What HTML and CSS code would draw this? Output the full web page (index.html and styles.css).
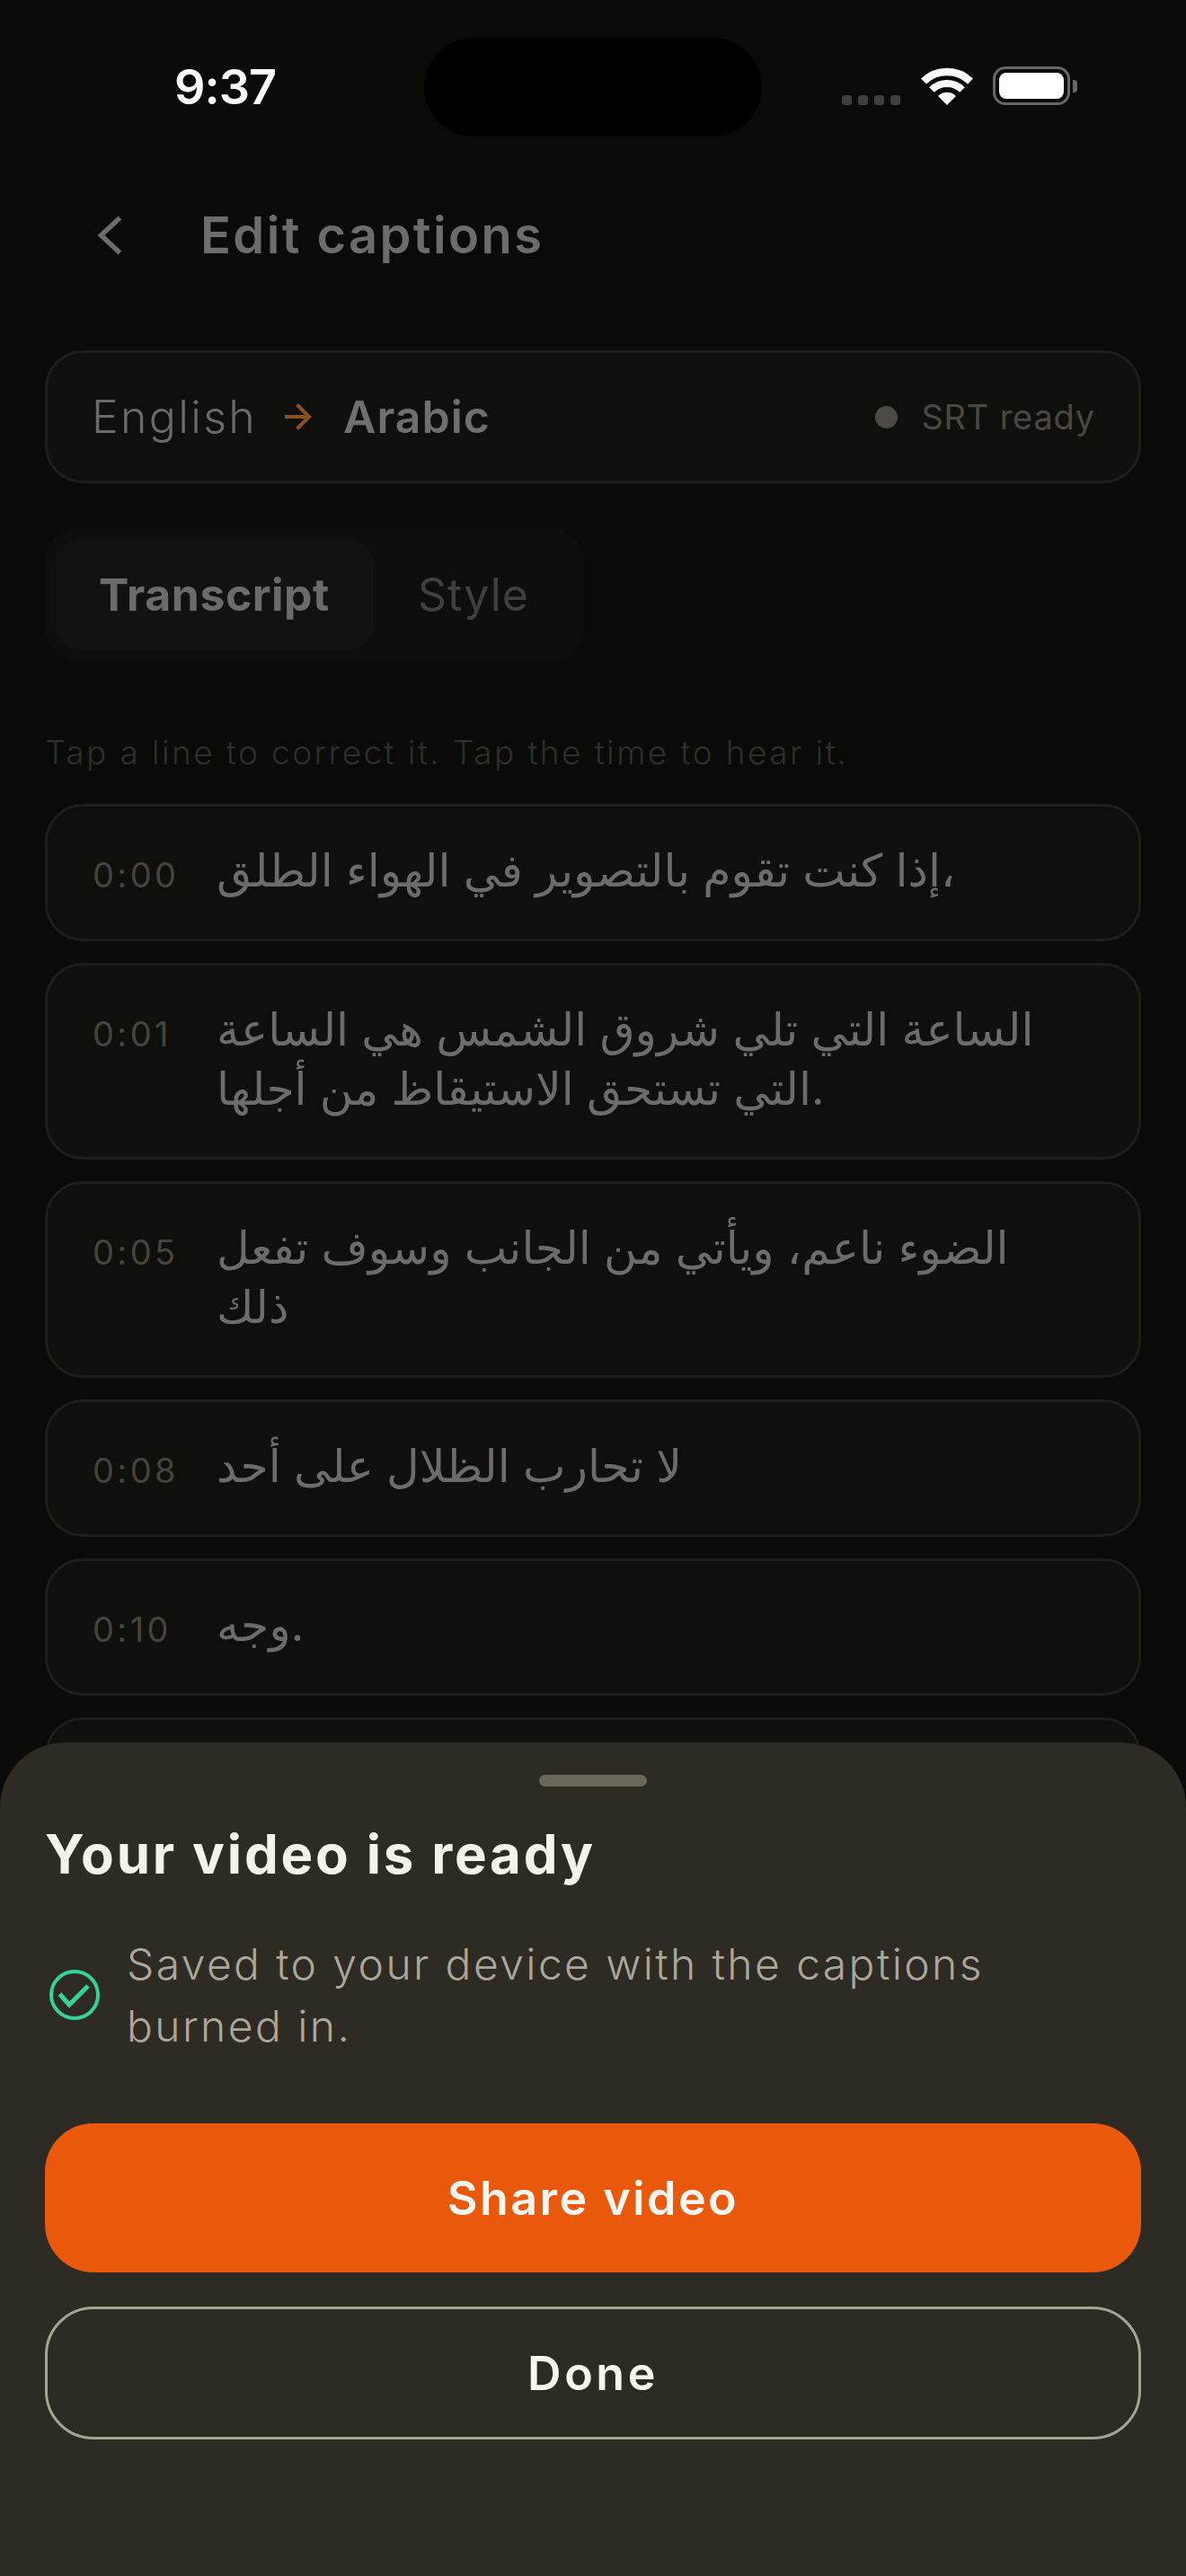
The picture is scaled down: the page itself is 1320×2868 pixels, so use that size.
FILE: index.html
```html
<!DOCTYPE html>
<html lang="en">
<head>
  <meta charset="UTF-8" />
  <meta name="viewport" content="width=device-width, initial-scale=1" />
  <title>Edit captions</title>
  <link rel="stylesheet" href="styles.css">
</head>
<body>
  <div class="screen">
    <div class="status">
      <div class="status-left"><span class="time">9:37</span></div>
      <div class="island"></div>
      <div class="status-right">
        <div class="signal"><i></i><i></i><i></i><i></i></div>
        <svg class="wifi" width="58" height="42" viewBox="0 0 58 42">
          <path d="M3 15.500A37.500 37.500 0 0 1 55 15.500" fill="none" stroke="#fff" stroke-width="8.500"/>
          <path d="M12 25A24 24 0 0 1 46 25" fill="none" stroke="#fff" stroke-width="8"/>
          <path d="M29 42L19 32A14 14 0 0 1 39 32Z" fill="#fff"/>
        </svg>
        <div class="battery"><div class="battery-fill"></div></div>
        <div class="battery-nub"></div>
      </div>
    </div>

    <div class="topbar">
      <svg class="back" width="30" height="46" viewBox="0 0 30 46">
        <path d="M25.500 3.500L4.500 23L25.500 42.500" fill="none" stroke="#6c6c6a" stroke-width="5.500"/>
      </svg>
      <h1>Edit captions</h1>
    </div>

    <main class="content">
      <div class="lang-card">
        <span class="lang-from">English</span>
        <svg class="lang-arrow" width="30" height="32" viewBox="0 0 30 32">
          <path d="M0 16H27M13.500 2.500L27 16L13.500 29.500" fill="none" stroke="#8b5220" stroke-width="4"/>
        </svg>
        <span class="lang-to">Arabic</span>
        <span class="srt"><i class="srt-dot"></i>SRT ready</span>
      </div>

      <div class="tabs">
        <div class="tab tab-active">Transcript</div>
        <div class="tab">Style</div>
      </div>

      <p class="hint">Tap a line to correct it. Tap the time to hear it.</p>

      <div class="lines">
        <div class="line"><span class="stamp">0:00</span><span class="line-text">إذا كنت تقوم بالتصوير في الهواء الطلق،</span></div>
        <div class="line"><span class="stamp">0:01</span><span class="line-text">الساعة التي تلي شروق الشمس هي الساعة التي تستحق الاستيقاظ من أجلها.</span></div>
        <div class="line"><span class="stamp">0:05</span><span class="line-text">الضوء ناعم، ويأتي من الجانب وسوف تفعل ذلك</span></div>
        <div class="line"><span class="stamp">0:08</span><span class="line-text">لا تحارب الظلال على أحد</span></div>
        <div class="line"><span class="stamp">0:10</span><span class="line-text">وجه.</span></div>
        <div class="line"><span class="line-text">&nbsp;</span></div>
      </div>
    </main>

    <section class="sheet">
      <div class="handle"></div>
      <h2>Your video is ready</h2>
      <div class="saved">
        <svg class="saved-icon" width="58" height="58" viewBox="0 0 58 58">
          <circle cx="29" cy="29" r="26" fill="none" stroke="#34d399" stroke-width="4"/>
          <path d="M12.500 28L23 40L44 19" fill="none" stroke="#34d399" stroke-width="5"/>
        </svg>
        <p>Saved to your device with the captions burned in.</p>
      </div>
      <button class="btn btn-primary">Share video</button>
      <button class="btn btn-outline">Done</button>
    </section>
  </div>
</body>
</html>
```

FILE: styles.css
```css
* {
  box-sizing: border-box;
}

body {
  margin: 0;
  background: #0a0a09;
  font-family: Inter, "Noto Sans", "DejaVu Sans", sans-serif;
}

.screen {
  position: relative;
  width: 1320px;
  height: 2868px;
  overflow: hidden;
  background: #0a0a09;
}

/* status bar */
.status {
  display: flex;
  padding-top: 42px;
  height: 152px;
}

.status-left {
  width: 472px;
  padding: 28px 0 0 194px;
}

.time {
  color: #fff;
  font-size: 54px;
  font-weight: 600;
  line-height: 1;
  letter-spacing: -1px;
}

.island {
  width: 376px;
  height: 110px;
  border-radius: 55px;
  background: #000;
}

.status-right {
  display: flex;
  align-items: flex-end;
  width: 472px;
  height: 75px;
  padding-left: 89px;
}

.signal {
  display: flex;
  gap: 7px;
  margin-right: 23px;
}

.signal i {
  width: 11px;
  height: 11px;
  border-radius: 3px;
  background: #3f3f3e;
}

.wifi {
  margin-right: 22px;
}

.battery {
  width: 86px;
  height: 43px;
  padding: 4px;
  border: 3px solid #666;
  border-radius: 14px;
}

.battery-fill {
  height: 100%;
  border-radius: 8px;
  background: #fff;
}

.battery-nub {
  width: 5px;
  height: 14px;
  margin: 0 0 14px 3px;
  border-radius: 0 4px 4px 0;
  background: #666;
}

/* header */
.topbar {
  display: flex;
  align-items: center;
  height: 62px;
  margin-top: 79px;
  padding-left: 108px;
}

.back {
  margin-right: 85px;
}

h1 {
  margin: 0;
  color: #6c6c6a;
  font-size: 56px;
  font-weight: 600;
  line-height: 62px;
  letter-spacing: 2.4px;
}

.content {
  padding: 97px 50px 0;
}

.lang-card {
  display: flex;
  align-items: center;
  height: 148px;
  padding: 0 48px 0 49px;
  border: 3px solid #1e1e1a;
  border-radius: 42px;
  background: #0f0f0c;
}

.lang-from {
  color: #6a6a66;
  font-size: 50px;
  font-weight: 300;
  letter-spacing: 2.300px;
}

.lang-arrow {
  margin: 0 35px 0 31px;
}

.lang-to {
  color: #6f6f6c;
  font-size: 50px;
  font-weight: 600;
  letter-spacing: 1px;
}

.srt {
  display: flex;
  align-items: center;
  margin-left: auto;
  color: #4a4844;
  font-size: 38px;
  font-weight: 400;
  letter-spacing: 0.8px;
}

.srt-dot {
  width: 25px;
  height: 25px;
  margin-right: 26px;
  border-radius: 50%;
  background: #4d4a46;
}

.tabs {
  display: inline-flex;
  margin-top: 50px;
  padding: 12px;
  border-radius: 36px;
  background: #0e0e0c;
  vertical-align: top;
}

.tab {
  padding: 0 48px 0 50px;
  color: #403f3b;
  font-size: 50px;
  line-height: 124px;
  letter-spacing: 1px;
}

.tab-active {
  padding: 0 48px;
  border-radius: 28px;
  background: #121210;
  color: #6b6b68;
  font-weight: 700;
  letter-spacing: 0.5px;
}

.hint {
  margin: 80px 0 0;
  color: #2f2e2b;
  font-size: 37px;
  font-weight: 300;
  line-height: 44px;
  letter-spacing: 2.4px;
}

.lines {
  display: flex;
  flex-direction: column;
  gap: 24px;
  margin-top: 35px;
}

.line {
  display: flex;
  padding: 40.5px 77px 40.5px 50px;
  border: 3px solid #1e1e1a;
  border-radius: 42px;
  background: #0f0f0c;
}

.stamp {
  flex: none;
  width: 138px;
  margin: 2px 0 -2px;
  color: #45433f;
  font-size: 38px;
  line-height: 66px;
  letter-spacing: 3.4px;
}

.line-text {
  margin: -3px 0 3px;
  color: #6d6c69;
  font-size: 50.5px;
  line-height: 66px;
}

/* bottom sheet */
.sheet {
  position: absolute;
  left: 0;
  right: 0;
  bottom: 0;
  height: 928px;
  padding: 36px 50px 0;
  border-radius: 72px 72px 0 0;
  background: #2e2a24;
}

.handle {
  width: 120px;
  height: 13px;
  margin: 0 auto;
  border-radius: 7px;
  background: #6b675b;
}

h2 {
  margin: 39px 0 0;
  color: #f5f2ec;
  font-size: 60px;
  font-weight: 700;
  line-height: 72px;
  letter-spacing: 2.8px;
}

.saved {
  display: flex;
  align-items: center;
  gap: 29px;
  margin-top: 52px;
  padding: 0 100px 0 4px;
}

.saved-icon {
  flex: none;
}

.saved p {
  margin: 0;
  color: #aaa69a;
  font-size: 48px;
  font-weight: 300;
  line-height: 69px;
  letter-spacing: 2.4px;
}

.btn {
  display: block;
  width: 100%;
  font-family: inherit;
  font-size: 52px;
  font-weight: 600;
  color: #f9f6f0;
  letter-spacing: 2.4px;
}

.btn-primary {
  height: 166px;
  margin-top: 74px;
  border: none;
  border-radius: 54px;
  background: #ea580c;
}

.btn-outline {
  height: 148px;
  margin-top: 38px;
  border: 3px solid #a8a494;
  border-radius: 54px;
  background: transparent;
  letter-spacing: 3.5px;
}
```
